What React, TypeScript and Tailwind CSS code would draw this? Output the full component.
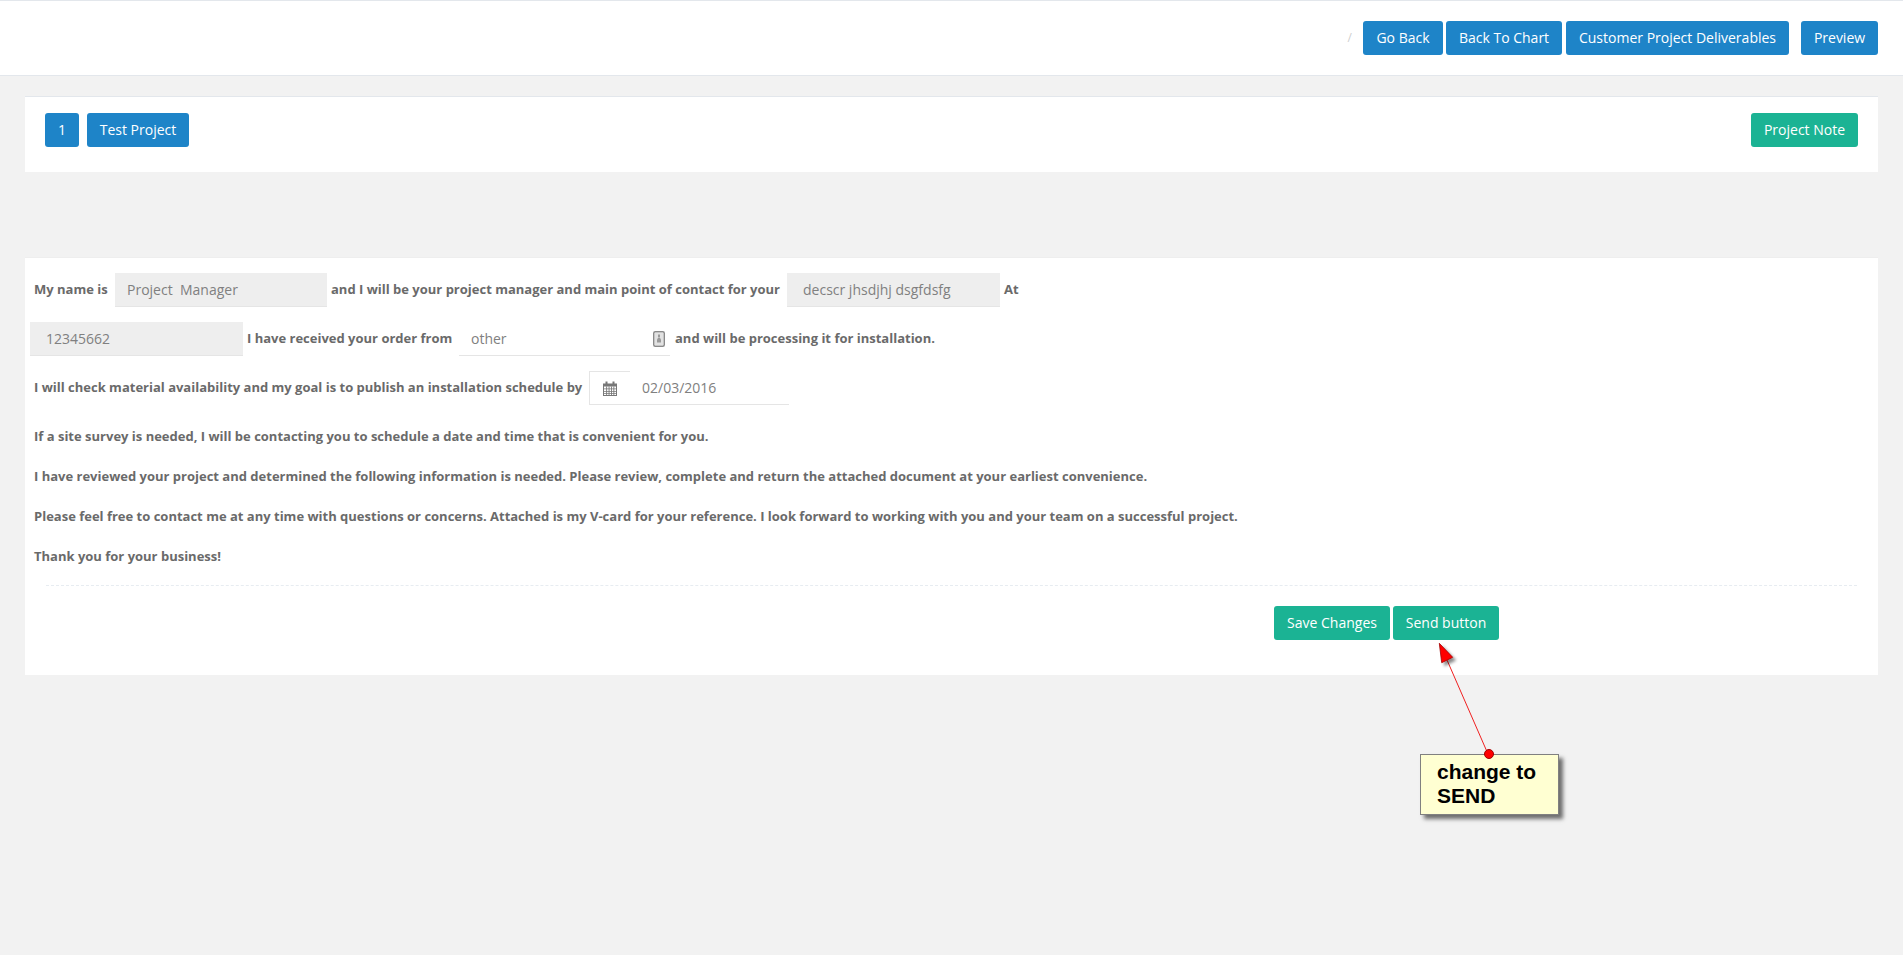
import React from "react";

const Btn = ({ children, green, className = "" }: { children: React.ReactNode; green?: boolean; className?: string }) => (
  <button className={`h-[34px] rounded-[3px] text-[14px] leading-[20px] text-white ${green ? "bg-[#1bb394]" : "bg-[#1e84c8]"} ${className}`}>{children}</button>
);

const Field = ({ children, className = "" }: { children: React.ReactNode; className?: string }) => (
  <div className={`h-[34px] flex items-center bg-[#eeeeee] border-b border-[#e5e5e5] text-[14px] font-normal text-[#808080] ${className}`}>{children}</div>
);

export default function App() {
  return (
    <div className="relative min-h-[955px] bg-[#f2f2f2] text-[#6a6a6a] font-['Open_Sans',sans-serif]">
      <header className="h-[76px] bg-white border-t border-b border-[#e3e7ec] flex items-center justify-end pr-[25px]">
        <span className="text-[#cfcfcf] text-[12px] mr-[11px]">/</span>
        <Btn className="w-[80px] mr-[3px]">Go Back</Btn>
        <Btn className="w-[116px] mr-[4px]">Back To Chart</Btn>
        <Btn className="w-[223px] mr-[12px]">Customer Project Deliverables</Btn>
        <Btn className="w-[77px]">Preview</Btn>
      </header>

      <section className="mx-[25px] mt-[20px] h-[76px] bg-white border-t border-[#e3e7ec] flex items-start justify-between px-[20px] pt-[16px]">
        <div className="flex gap-[8px]">
          <Btn className="w-[34px]">1</Btn>
          <Btn className="w-[102px]">Test Project</Btn>
        </div>
        <Btn green className="w-[107px]">Project Note</Btn>
      </section>

      <section className="mx-[25px] mt-[85px] h-[418px] bg-white border-t border-[#eeeeee] pt-[15px]">
        <div className="flex items-center h-[34px] pl-[9px] text-[13px] font-bold">
          <span className="w-[81px]">My name is</span>
          <Field className="w-[212px] pl-[12px]">Project&nbsp; Manager</Field>
          <span className="ml-[4px] w-[456px]">and I will be your project manager and main point of contact for your</span>
          <Field className="w-[213px] pl-[16px]">decscr jhsdjhj dsgfdsfg</Field>
          <span className="ml-[4px]">At</span>
        </div>
        <div className="flex items-center h-[34px] mt-[15px] pl-[5px] text-[13px] font-bold">
          <Field className="w-[213px] pl-[16px]">12345662</Field>
          <span className="ml-[4px] w-[212px]">I have received your order from</span>
          <div className="w-[211px] h-[34px] flex items-center justify-between border-b border-[#e5e5e5] pl-[12px] pr-[5px] text-[14px] font-normal text-[#808080]">
            <span>other</span>
            <svg width="12" height="16" viewBox="0 0 12 16" fill="none">
              <rect x="0.75" y="0.75" width="10.5" height="14.5" rx="1.5" stroke="#8a8a8a" strokeWidth="1.5" />
              <rect x="2" y="2" width="8" height="12" fill="#e2e2e2" />
              <rect x="5" y="3.5" width="2" height="3" fill="#9a9a9a" />
              <path d="M4 11.5V8.5L5 7h2l1 1.5v3z" fill="#9a9a9a" />
            </svg>
          </div>
          <span className="ml-[5px]">and will be processing it for installation.</span>
        </div>
        <div className="flex items-center h-[34px] mt-[15px] pl-[9px] text-[13px] font-bold">
          <span className="w-[555px]">I will check material availability and my goal is to publish an installation schedule by</span>
          <div className="w-[200px] h-[34px] flex items-center border-b border-[#e5e5e5] text-[14px] font-normal text-[#808080]">
            <div className="w-[41px] h-[34px] flex items-center justify-center border-l border-t border-[#e5e5e5]">
              <svg width="14" height="15" viewBox="0 0 14 15" fill="#777">
                <path d="M0 2.5h2.5v-2h2v2h5v-2h2v2H14V15H0zM1 5.5V14h12V5.5z" />
                <path d="M1 7.4h12v.9H1zM1 9.9h12v.9H1zM1 12.2h12v.9H1zM3.2 5.5h.9V14h-.9zM5.6 5.5h.9V14h-.9zM8 5.5h.9V14H8zM10.4 5.5h.9V14h-.9z" />
              </svg>
            </div>
            <span className="ml-[12px]">02/03/2016</span>
          </div>
        </div>
        <div className="pl-[9px] text-[13px] font-bold leading-[20px] mt-[21px] flex flex-col gap-[20px]">
          <p>If a site survey is needed, I will be contacting you to schedule a date and time that is convenient for you.</p>
          <p>I have reviewed your project and determined the following information is needed. Please review, complete and return the attached document at your earliest convenience.</p>
          <p>Please feel free to contact me at any time with questions or concerns. Attached is my V-card for your reference. I look forward to working with you and your team on a successful project.</p>
          <p>Thank you for your business!</p>
        </div>
        <div className="mx-[21px] mt-[19px] border-t border-dashed border-[#e7ecf1] pt-[20px] flex pl-[1228px] gap-[3px]">
          <Btn green className="w-[116px]">Save Changes</Btn>
          <Btn green className="w-[106px]">Send button</Btn>
        </div>
      </section>

      {/* Annotation */}
      <svg className="absolute left-[1420px] top-[635px]" width="90" height="130" viewBox="1420 635 90 130">
        <defs>
          <filter id="s" x="-50%" y="-50%" width="200%" height="200%">
            <feDropShadow dx="3" dy="3" stdDeviation="1.5" floodColor="#000" floodOpacity="0.45" />
          </filter>
        </defs>
        <line x1="1488" y1="754" x2="1447" y2="660" stroke="#f02020" strokeWidth="1" />
        <path d="M1439.3 643.3L1452.7 657.3L1441.7 662.7Z" fill="#ff0000" stroke="#a00000" strokeWidth="0.8" filter="url(#s)" />
      </svg>
      <div className="absolute left-[1420px] top-[754px] w-[139px] h-[61px] bg-[#ffffd2] border border-[#808080] shadow-[4px_4px_4px_rgba(0,0,0,0.55)] pl-[16px] pt-[5px] font-['Liberation_Sans',sans-serif] font-bold text-[21px] leading-[24px] text-black">
        change to<br />SEND
      </div>
      <div className="absolute left-[1484px] top-[749px] w-[10px] h-[10px] rounded-full bg-[#ff0000] border border-[#a00000]" />
    </div>
  );
}
